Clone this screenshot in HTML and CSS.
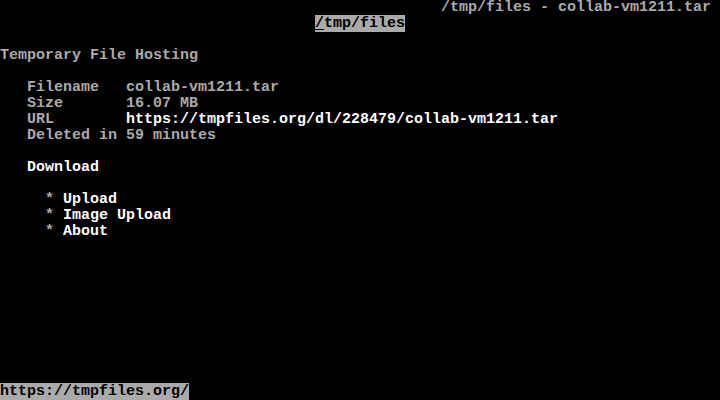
FILE: index.html
```html
<!DOCTYPE html>
<html>
<head>
<meta charset="utf-8">
<title>/tmp/files - collab-vm1211.tar</title>
<link rel="stylesheet" href="styles.css">
</head>
<body>
<div class="screen">
  <div class="row title">/tmp/files - collab-vm1211.tar</div>
  <div class="row heading"><span class="hl"><span class="cur">/</span>tmp/files</span></div>
  <div class="row gap">Temporary File Hosting</div>
  <div class="info gap">
    <div class="label">Filename</div><div>collab-vm1211.tar</div>
    <div class="label">Size</div><div>16.07 MB</div>
    <div class="label">URL</div><div class="link">https://tmpfiles.org/dl/228479/collab-vm1211.tar</div>
    <div class="label span">Deleted in 59 minutes</div>
  </div>
  <div class="row indent gap link">Download</div>
  <ul class="menu gap">
    <li><span class="bullet">*</span><span class="link">Upload</span></li>
    <li><span class="bullet">*</span><span class="link">Image Upload</span></li>
    <li><span class="bullet">*</span><span class="link">About</span></li>
  </ul>
  <div class="row status"><span class="hl">https://tmpfiles.org/</span></div>
</div>
</body>
</html>
```
FILE: styles.css
```css
html, body {
  margin: 0;
  padding: 0;
  background: #000;
}
.screen {
  width: 720px;
  height: 400px;
  display: flex;
  flex-direction: column;
  font-family: "Liberation Mono", "DejaVu Sans Mono", monospace;
  font-size: 15px;
  font-weight: bold;
  line-height: 16px;
  color: #aaaaaa;
  white-space: nowrap;
  overflow: hidden;
}
.row {
  height: 16px;
}
.title {
  text-align: right;
  padding-right: 9px;
}
.heading {
  text-align: center;
}
.hl {
  background: #aaaaaa;
  color: #000;
}
.cur {
  text-decoration: underline;
  text-underline-offset: 2px;
}
.gap {
  margin-top: 16px;
}
.info {
  display: grid;
  grid-template-columns: 99px auto;
  padding-left: 27px;
}
.info > div {
  height: 16px;
}
.info .span {
  grid-column: 1 / 3;
}
.link {
  color: #ffffff;
}
.indent {
  padding-left: 27px;
}
.menu {
  list-style: none;
  margin-bottom: 0;
  padding: 0 0 0 45px;
}
.menu li {
  height: 16px;
}
.bullet {
  display: inline-block;
  width: 18px;
}
.status {
  margin-top: auto;
}
```
